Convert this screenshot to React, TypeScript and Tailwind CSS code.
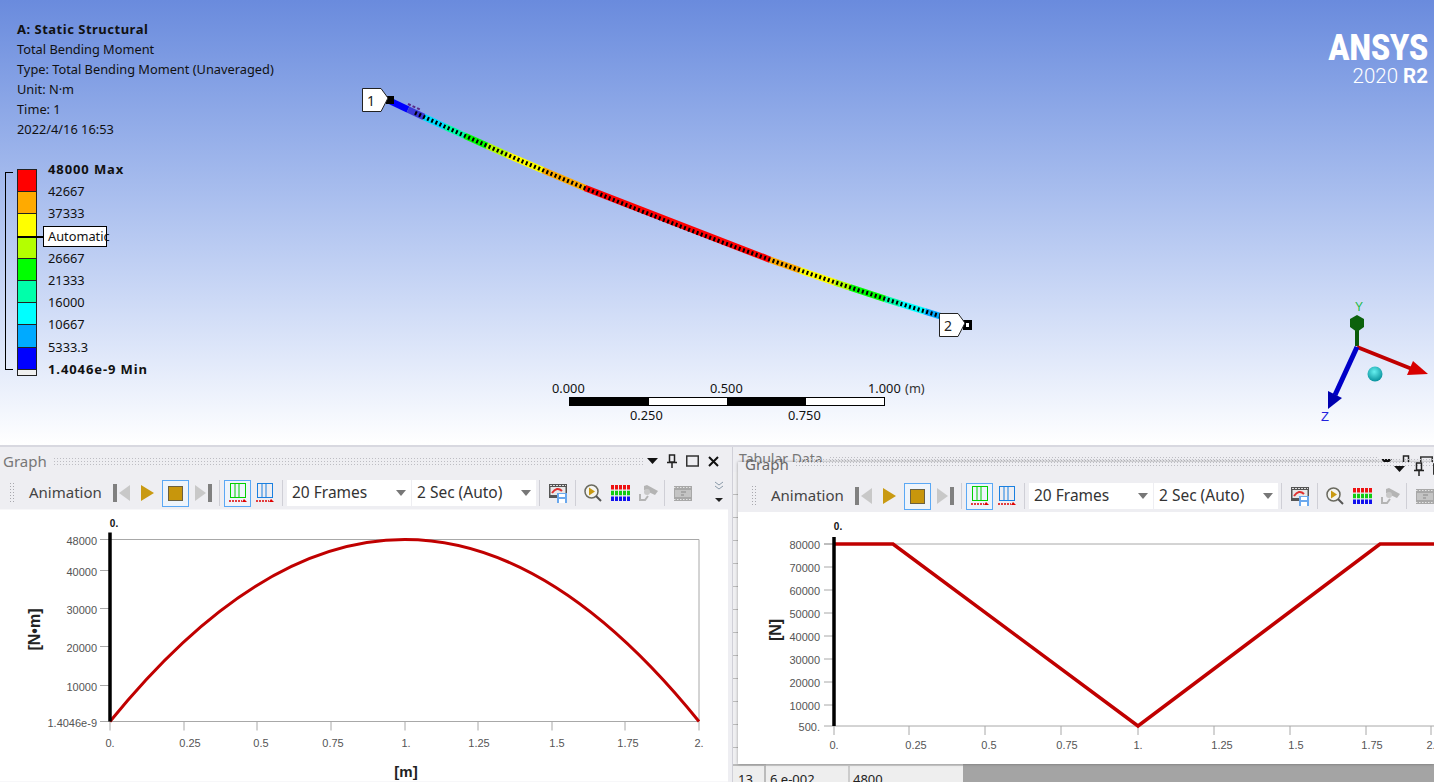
import React from "react";

const legendRows = [
  { color: "bg-[#ff0000]", label: "48000 Max", bold: true },
  { color: "bg-[#ffaa00]", label: "42667" },
  { color: "bg-[#ffff00]", label: "37333" },
  { color: "bg-[#b4ff00]", label: "" },
  { color: "bg-[#00ff00]", label: "26667" },
  { color: "bg-[#00ffaa]", label: "21333" },
  { color: "bg-[#00ffff]", label: "16000" },
  { color: "bg-[#00aaff]", label: "10667" },
  { color: "bg-[#0000ff]", label: "5333.3" },
];

const beamSegments: [number, number, string][] = [
  [388, 408, "#0000ff"],
  [408, 424, "#3a3ad8"],
  [424, 445, "#00ddff"],
  [445, 465, "#00ffaa"],
  [465, 487, "#00ff00"],
  [487, 507, "#b4ff00"],
  [507, 543, "#ffff00"],
  [543, 585, "#ffaa00"],
  [585, 770, "#ff0000"],
  [770, 800, "#ffaa00"],
  [800, 835, "#ffff00"],
  [835, 850, "#b4ff00"],
  [850, 885, "#00ff00"],
  [885, 900, "#00ffaa"],
  [900, 925, "#00ffff"],
  [925, 945, "#00aaff"],
];

const beamY = (x: number) => 100 + 0.4479 * (x - 388) - 0.000157 * (x - 388) * (x - 580);

const Beam = () => {
  const dashed: string[] = [];
  for (let x = 415; x <= 940; x += 5) dashed.push(`${x},${beamY(x).toFixed(1)}`);
  return (
    <svg className="absolute left-0 top-0" width="1434" height="445">
      {beamSegments.map(([a, b, color], i) => (
        <line key={i} x1={a} y1={beamY(a)} x2={b} y2={beamY(b)} stroke={color} strokeWidth="6.5" />
      ))}
      <polyline points={dashed.join(" ")} fill="none" stroke="#000" strokeWidth="4" strokeDasharray="2 2.5" />
      <path d="M408 104 L421 110" stroke="#5a2a8a" strokeWidth="2" strokeDasharray="3 2" />
    </svg>
  );
};

const Triad = () => (
  <svg className="absolute left-0 top-0" width="1434" height="445">
    <line x1="1357" y1="346" x2="1357" y2="325" stroke="#0a5a0a" strokeWidth="4" />
    <polygon points="1357,315 1364,319 1364,327 1357,332 1350,327 1350,319" fill="#0c620c" />
    <line x1="1357" y1="347" x2="1412" y2="369" stroke="#c00000" strokeWidth="4" />
    <polygon points="1428,374 1407,375 1413,361" fill="#d80000" />
    <line x1="1357" y1="347" x2="1335" y2="395" stroke="#0000c8" strokeWidth="5" />
    <polygon points="1328,409 1328,391 1342,398" fill="#0000b0" />
    <defs>
      <radialGradient id="ball" cx="0.45" cy="0.35" r="0.7">
        <stop offset="0" stopColor="#66f0f0" />
        <stop offset="1" stopColor="#008a96" />
      </radialGradient>
    </defs>
    <circle cx="1375" cy="374" r="7.5" fill="url(#ball)" />
    <text x="1359" y="311" textAnchor="middle" fontSize="12" fill="#22bb44" fontFamily="Liberation Sans">Y</text>
    <text x="1325" y="421" textAnchor="middle" fontSize="13" fill="#2222dd" fontFamily="Liberation Sans">Z</text>
  </svg>
);

const Probe = ({ n }: { n: string }) => (
  <div className="relative h-[24px] w-[27px]">
    <svg width="27" height="24" className="absolute left-0 top-0">
      <polygon points="0.5,0.5 19,0.5 26,10 19,23.5 0.5,23.5" fill="#fff" stroke="#222" />
    </svg>
    <span className="absolute left-[5px] top-[2px] text-[14px] text-[#222]">{n}</span>
  </div>
);

const Viewport = () => (
  <div className="relative h-[445px] shrink-0 overflow-hidden bg-linear-to-b from-[#6a8bdd] to-white font-['Noto_Sans',sans-serif] text-[12.8px] text-[#111]">
    <Beam />
    <Triad />

    <div className="absolute left-[17px] top-[19px] flex flex-col leading-[20px]">
      <span className="text-[13px] font-bold tracking-[0.5px]">A: Static Structural</span>
      <span>Total Bending Moment</span>
      <span>Type: Total Bending Moment (Unaveraged)</span>
      <span>Unit: N·m</span>
      <span>Time: 1</span>
      <span>2022/4/16 16:53</span>
    </div>

    <div className="absolute left-[5px] top-[172px] h-[198px] w-[8px] border-y border-l border-black" />
    <div className="absolute left-[17px] top-[169px] flex w-[160px] flex-col">
      {legendRows.map((row) => (
        <div key={row.color} className="flex h-[22.2px] items-start">
          <div className={`h-full w-[20px] border-x border-t border-[#222] ${row.color}`} />
          <span className={`-mt-[11px] ml-[11px] whitespace-nowrap leading-[22px] ${row.bold ? "text-[13px] font-bold tracking-[0.9px]" : ""}`}>{row.label}</span>
        </div>
      ))}
      <div className="flex h-[7px] items-start">
        <div className="h-full w-[20px] border border-[#222] bg-[#f0f0f0]" />
        <span className="-mt-[11px] ml-[11px] whitespace-nowrap text-[13px] font-bold leading-[22px] tracking-[0.9px]">1.4046e-9 Min</span>
      </div>
    </div>
    <div className="absolute left-[17px] top-[236px] h-[2px] w-[27px] bg-black" />
    <div className="absolute left-[43px] top-[226px] flex h-[21px] w-[64px] items-center whitespace-nowrap border border-black bg-white pl-[4px]">
      Automatic
    </div>

    <div className="absolute left-[362px] top-[88px] flex items-center">
      <Probe n="1" />
      <div className="-ml-[3px] h-[8px] w-[8px] bg-black" />
    </div>
    <div className="absolute left-[939px] top-[313px] flex items-center">
      <Probe n="2" />
      <div className="-ml-[3px] h-[10px] w-[9px] border-[3px] border-black bg-white" />
    </div>

    <div className="absolute left-[569px] top-[381px] flex w-[316px] flex-col">
      <div className="relative -mt-[1px] h-[17px] leading-[16px]">
        <span className="absolute left-[-17px]">0.000</span>
        <span className="absolute left-[141px]">0.500</span>
        <span className="absolute left-[299px] whitespace-nowrap">1.000 <span className="ml-[1px] text-[#333]">(m)</span></span>
      </div>
      <div className="flex h-[9px] border border-black">
        <div className="w-1/4 bg-black" />
        <div className="w-1/4 bg-white" />
        <div className="w-1/4 bg-black" />
        <div className="w-1/4 bg-white" />
      </div>
      <div className="relative h-[16px] leading-[18px]">
        <span className="absolute left-[61px]">0.250</span>
        <span className="absolute left-[219px]">0.750</span>
      </div>
    </div>

    <div className="absolute right-[6px] top-[26px] flex flex-col items-end text-white font-['Roboto',sans-serif]">
      <span className="origin-right scale-x-[0.85] text-[36px] font-black leading-[44px]">ANSYS</span>
      <span className="-mt-[6px] text-[20.5px] font-light leading-[24px]">2020 <b className="font-bold">R2</b></span>
    </div>
  </div>
);

const FirstFrame = ({ flip }: { flip?: boolean }) => (
  <svg width="17" height="18" viewBox="0 0 17 18" className={flip ? "-scale-x-100" : ""}>
    <rect x="0" y="0" width="4" height="18" fill="#808080" />
    <polygon points="17,1 17,17 6,9" fill="#c8c8c8" />
  </svg>
);

const Play = () => (
  <svg width="13" height="16" viewBox="0 0 13 16">
    <polygon points="0,0 13,8 0,16" fill="#c99a12" />
  </svg>
);

const ActiveBox = ({ children }: { children: React.ReactNode }) => (
  <div className="flex h-[27px] w-[27px] items-center justify-center border border-[#5aa8f5] bg-[#eef4fb]">{children}</div>
);

const Bars = ({ color }: { color: string }) => (
  <svg width="18" height="22" viewBox="0 0 18 22">
    <rect x="1.5" y="1.5" width="15" height="14" fill="none" stroke={color} />
    <path d="M6 1.5V16M10 1.5V16" stroke={color} />
    <path d="M0 19H8M9 19H13" stroke="#e00000" strokeWidth="1.5" strokeDasharray="2 1" />
    <polygon points="15,17 18,20 13,20" fill="#e00000" />
  </svg>
);

const SaveMovie = () => (
  <svg width="18" height="20" viewBox="0 0 18 20">
    <rect x="0" y="1" width="18" height="14" fill="#555" />
    <rect x="1.5" y="4" width="15" height="8" fill="#e8e8e8" />
    <path d="M1 2.5H17" stroke="#ddd" strokeDasharray="2 1" />
    <path d="M3 10 Q8 3 13 8" fill="none" stroke="#e03030" strokeWidth="2" />
    <rect x="8" y="10" width="10" height="10" fill="#6aa8ee" />
    <rect x="10" y="11" width="6" height="3" fill="#fff" />
    <rect x="10" y="16" width="6" height="4" fill="#fff" />
  </svg>
);

const Lens = () => (
  <svg width="18" height="18" viewBox="0 0 18 18">
    <circle cx="7.5" cy="7.5" r="6.5" fill="#f4f4f0" stroke="#6a6a60" strokeWidth="1.5" />
    <polygon points="5,3.5 11,7.5 5,11.5" fill="#c99a12" />
    <line x1="12" y1="12" x2="17" y2="17" stroke="#555" strokeWidth="2" />
  </svg>
);

const ColorGrid = () => (
  <svg width="19" height="16" viewBox="0 0 19 16">
    <path d="M0 2.25H19" stroke="#ee1111" strokeWidth="4.5" strokeDasharray="3 1" />
    <path d="M0 8H19" stroke="#11cc11" strokeWidth="4.5" strokeDasharray="3 1" />
    <path d="M0 13.75H19" stroke="#1111ee" strokeWidth="4.5" strokeDasharray="3 1" />
  </svg>
);

const Camera = () => (
  <svg width="19" height="16" viewBox="0 0 19 16">
    <polygon points="5,1 8,0 19,6 16,10 5,5" fill="#b4b4b4" />
    <circle cx="8" cy="7" r="3" fill="#c8c8c8" />
    <path d="M1 9V15H6L9 11" fill="none" stroke="#b4b4b4" strokeWidth="2" />
  </svg>
);

const Film = () => (
  <svg width="18" height="15" viewBox="0 0 18 15">
    <rect width="18" height="15" fill="#a8a8a8" />
    <path d="M0 1.5H18M0 13.5H18" stroke="#e4e4e4" strokeDasharray="1.5 1.5" />
    <rect x="1" y="4" width="16" height="7" fill="#c4c4c4" />
    <path d="M7 6H12M7 9H10" stroke="#888" />
  </svg>
);

const Sep = ({ className }: { className: string }) => <div className={`h-[26px] w-px shrink-0 bg-[#cfcfd6] ${className}`} />;

const Select = ({ value, className }: { value: string; className?: string }) => (
  <div className={`flex h-[26px] w-[124px] shrink-0 items-center justify-between bg-white px-[5px] text-[15.5px] text-[#333] ${className ?? ""}`}>
    <span className="whitespace-nowrap">{value}</span>
    <svg width="10" height="6" viewBox="0 0 10 6">
      <polygon points="0,0 10,0 5,6" fill="#777" />
    </svg>
  </div>
);

const AnimationToolbar = ({ inset }: { inset?: boolean }) => (
  <div className="flex h-[32px] shrink-0 items-center overflow-hidden bg-[#eeeef2] font-['Noto_Sans',sans-serif]">
    <div className={`${inset ? "ml-[13px]" : "ml-[9px]"} h-[22px] w-[6px] shrink-0 bg-[radial-gradient(#a8a8ae_1px,transparent_1px)] bg-size-[3px_3px]`} />
    <span className="-mt-[2px] ml-[14px] w-[72px] shrink-0 whitespace-nowrap text-[15px] text-[#444]">Animation</span>
    <div className="ml-[12px] shrink-0"><FirstFrame /></div>
    <div className="ml-[11px] shrink-0"><Play /></div>
    <div className="ml-[8px] shrink-0">
      <ActiveBox>
        <div className="h-[15px] w-[15px] border border-[#6b6040] bg-[#c8960c]" />
      </ActiveBox>
    </div>
    <div className="ml-[6px] shrink-0"><FirstFrame flip /></div>
    <Sep className="ml-[7px]" />
    <div className="ml-[4px] shrink-0">
      <ActiveBox>
        <Bars color="#00d000" />
      </ActiveBox>
    </div>
    <div className="ml-[5px] shrink-0"><Bars color="#1a80e0" /></div>
    <Sep className="ml-[8px]" />
    <Select value="20 Frames" className="ml-[4px]" />
    <Select value="2 Sec (Auto)" className="ml-[1px]" />
    <Sep className="ml-[3px]" />
    <div className="ml-[9px] shrink-0"><SaveMovie /></div>
    <Sep className="ml-[8px]" />
    <div className="ml-[8px] shrink-0"><Lens /></div>
    <div className="ml-[9px] shrink-0"><ColorGrid /></div>
    <div className="ml-[9px] shrink-0"><Camera /></div>
    <Sep className="ml-[6px]" />
    <div className="ml-[9px] shrink-0"><Film /></div>
    <svg width="8" height="24" viewBox="0 0 8 24" className="ml-[23px] shrink-0">
      <path d="M0 1L4 4L8 1M0 5L4 8L8 5" fill="none" stroke="#8a9aa8" />
      <polygon points="0,17 8,17 4,21" fill="#222" />
    </svg>
  </div>
);

const Dots = ({ className }: { className: string }) => (
  <div className={`h-[8px] bg-[radial-gradient(#bdbdc3_1px,transparent_1px)] bg-size-[3px_3px] ${className}`} />
);

const PaneButtons = () => (
  <div className="flex shrink-0 items-center gap-[9px]">
    <svg width="11" height="6" viewBox="0 0 11 6">
      <polygon points="0,0 11,0 5.5,6" fill="#111" />
    </svg>
    <svg width="10" height="14" viewBox="0 0 10 14">
      <path d="M2.5 1H7.5V8H2.5ZM0 8.5H10M5 9V14" fill="none" stroke="#222" strokeWidth="1.5" />
    </svg>
    <svg width="13" height="12" viewBox="0 0 13 12">
      <rect x="0.75" y="1" width="11.5" height="10" fill="none" stroke="#333" strokeWidth="1.5" />
    </svg>
    <svg width="11" height="11" viewBox="0 0 11 11">
      <path d="M1 1L10 10M10 1L1 10" stroke="#111" strokeWidth="2" />
    </svg>
  </div>
);

const axisText = { fontFamily: "Liberation Sans", fontSize: 11, fill: "#555" };

const MomentPlot = () => {
  const yTicks: [string, number][] = [
    ["48000", 540], ["40000", 571], ["30000", 609], ["20000", 647], ["10000", 686], ["1.4046e-9", 722],
  ];
  const xTicks: [string, number, number][] = [
    ["0.", 110, 110], ["0.25", 184, 190], ["0.5", 257, 261], ["0.75", 331, 333], ["1.", 405, 406],
    ["1.25", 478, 479], ["1.5", 552, 557], ["1.75", 625, 628], ["2.", 699, 699],
  ];
  return (
    <svg className="block flex-1" width="728" height="272" viewBox="0 510 728 272">
      <rect x="0" y="510" width="728" height="272" fill="#fff" />
      <path d="M100 540H699V722H110" fill="none" stroke="#a8a8a8" />
      {yTicks.map(([label, y]) => (
        <g key={label}>
          <line x1="100" x2="110" y1={y} y2={y} stroke="#a8a8a8" />
          <text x="97" y={y + 5} textAnchor="end" {...axisText}>{label}</text>
        </g>
      ))}
      {xTicks.map(([label, tick, x]) => (
        <g key={label}>
          <line x1={tick} x2={tick} y1="722" y2="731" stroke="#a8a8a8" />
          <text x={x} y="747" textAnchor="middle" {...axisText}>{label}</text>
        </g>
      ))}
      <path d="M110 722Q405 358 699 722" fill="none" stroke="#c00000" strokeWidth="3" />
      <line x1="110" x2="110" y1="533" y2="722" stroke="#000" strokeWidth="3.5" />
      <text x="114" y="527" textAnchor="middle" fontFamily="Liberation Sans" fontSize="10" fontWeight="bold" fill="#111">0.</text>
      <text x="406" y="777" textAnchor="middle" fontFamily="Liberation Sans" fontSize="15" fontWeight="bold" fill="#222">[m]</text>
      <text transform="translate(40 630) rotate(-90)" textAnchor="middle" fontFamily="Liberation Sans" fontSize="16" fontWeight="bold" fill="#222">[N•m]</text>
    </svg>
  );
};

const ShearPlot = () => {
  const yTicks: [string, number][] = [
    ["80000", 544], ["70000", 567], ["60000", 590], ["50000", 613], ["40000", 636],
    ["30000", 659], ["20000", 682], ["10000", 705], ["500.", 726],
  ];
  const xTicks: [string, number, number][] = [
    ["0.", 834, 834], ["0.25", 909, 916], ["0.5", 985, 989], ["0.75", 1061, 1067], ["1.", 1138, 1138],
    ["1.25", 1214, 1222], ["1.5", 1290, 1296], ["1.75", 1366, 1372], ["2.", 1431, 1431],
  ];
  return (
    <svg className="block" width="696" height="252" viewBox="738 512 696 252">
      <rect x="738" y="512" width="696" height="252" fill="#fff" />
      <path d="M824 544H1434M834 726H1434" fill="none" stroke="#a8a8a8" />
      {yTicks.map(([label, y]) => (
        <g key={label}>
          <line x1="824" x2="834" y1={y} y2={y} stroke="#a8a8a8" />
          <text x="820" y={y + 5} textAnchor="end" {...axisText}>{label}</text>
        </g>
      ))}
      {xTicks.map(([label, tick, x]) => (
        <g key={label}>
          <line x1={tick} x2={tick} y1="726" y2="735" stroke="#a8a8a8" />
          <text x={x} y="749" textAnchor="middle" {...axisText}>{label}</text>
        </g>
      ))}
      <polyline points="834,544 893,544 1138,726 1380,544 1434,544" fill="none" stroke="#c00000" strokeWidth="3.5" />
      <line x1="834" x2="834" y1="537" y2="726" stroke="#000" strokeWidth="3.5" />
      <text x="838" y="530" textAnchor="middle" fontFamily="Liberation Sans" fontSize="10" fontWeight="bold" fill="#111">0.</text>
      <text transform="translate(781 630) rotate(-90)" textAnchor="middle" fontFamily="Liberation Sans" fontSize="16" fontWeight="bold" fill="#222">[N]</text>
    </svg>
  );
};

const TabularBehind = () => (
  <div className="ml-[4px] flex flex-1 flex-col overflow-hidden border-l border-[#d0d0d8] bg-[#eeeef2] font-['Noto_Sans',sans-serif]">
    <div className="flex h-[25px] items-start pl-[6px] pt-[2px]">
      <span className="whitespace-nowrap text-[14px] leading-[20px] text-[#777]">Tabular Data</span>
      <Dots className="ml-[6px] mt-[7px] min-w-0 flex-1" />
      <div className="-mr-[19px] ml-[2px] mt-[6px]"><PaneButtons /></div>
    </div>
    <div className="flex-1 bg-[repeating-linear-gradient(#f0f0f2_0_22px,#bcbcbc_22px_23px)]" />
    <div className="flex h-[18px] overflow-hidden bg-[#a4a4a4] text-[13px] leading-[18px] text-[#222]">
      <div className="w-[33px] border-r-2 border-t-2 border-[#bbb] bg-[#eeeeee] pl-[5px] pt-[4px]">13</div>
      <div className="w-[84px] border-r-2 border-t-2 border-[#ccc] bg-[#eeeeee] pl-[4px] pt-[4px]">6 e-002</div>
      <div className="w-[113px] border-t-2 border-[#ccc] bg-[#eeeeee] pl-[3px] pt-[4px]">4800</div>
    </div>
  </div>
);

const FloatingGraph = () => (
  <div className="absolute left-[738px] top-[15px] flex h-[302px] w-[696px] flex-col overflow-visible bg-[#eeeef2] font-['Noto_Sans',sans-serif] shadow-[0_0_3px_rgba(0,0,0,0.35)]">
    <div className="relative flex h-[18px] shrink-0 items-start pl-[7px]">
      <span className="-mt-[8px] text-[15px] leading-[20px] text-[#666]">Graph</span>
      <Dots className="-mt-[4px] ml-[6px] min-w-0 flex-1" />
      <div className="absolute left-[656px] top-0"><PaneButtons /></div>
    </div>
    <AnimationToolbar inset />
    <ShearPlot />
  </div>
);

export default function App() {
  return (
    <div className="flex h-[782px] w-[1434px] flex-col overflow-hidden bg-[#eeeef2]">
      <Viewport />
      <div className="relative flex flex-1 border-t-2 border-[#d8d8e0]">
        <div className="flex w-[728px] shrink-0 flex-col bg-[#eeeef2] font-['Noto_Sans',sans-serif]">
          <div className="flex h-[30px] shrink-0 items-center pb-[2px] pl-[3px] pr-[9px]">
            <span className="text-[15px] text-[#777]">Graph</span>
            <Dots className="ml-[6px] flex-1" />
            <div className="ml-[2px]"><PaneButtons /></div>
          </div>
          <AnimationToolbar />
          <MomentPlot />
        </div>
        <TabularBehind />
        <FloatingGraph />
      </div>
    </div>
  );
}
